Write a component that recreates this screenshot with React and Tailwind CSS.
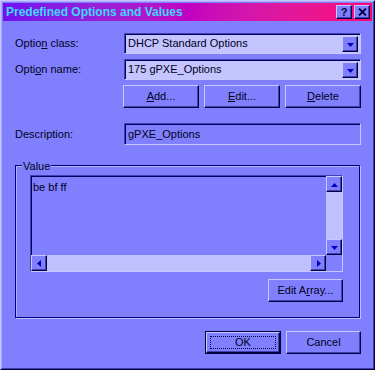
const raised =
  "border border-t-[#c8c8ff] border-l-[#c8c8ff] border-r-[#000040] border-b-[#000040] shadow-[inset_-1px_-1px_0_#4040b0]";
const sunken =
  "border border-t-[#4040b0] border-l-[#4040b0] border-r-[#c8c8ff] border-b-[#c8c8ff] shadow-[inset_1px_1px_0_#000060]";

function Btn({ children, className = "", isDefault = false }) {
  if (isDefault) {
    return (
      <div className={`h-[23px] border border-[#000040] ${className}`}>
        <div className={`h-full w-full flex items-center justify-center ${raised}`}>
          <div className="border border-dotted border-[#000040] w-[calc(100%-6px)] h-[calc(100%-6px)] flex items-center justify-center">
            {children}
          </div>
        </div>
      </div>
    );
  }
  return (
    <div className={`h-[23px] flex items-center justify-center ${raised} ${className}`}>
      {children}
    </div>
  );
}

function ArrowBtn({ dir, className = "" }) {
  const pts = {
    down: "4,6 11,6 7.5,10",
    up: "4,10 11,10 7.5,6",
    left: "9,4 9,11 5,7.5",
    right: "6,4 6,11 10,7.5",
  }[dir];
  return (
    <div className={`w-[16px] h-[16px] bg-[#8080ff] ${raised} flex items-center justify-center ${className}`}>
      <svg width="14" height="14" viewBox="0 0 14 14">
        <polygon points={pts} fill="#0000c0" />
      </svg>
    </div>
  );
}

function Combo({ value }) {
  return (
    <div className={`h-[21px] w-[237px] flex items-center bg-[#c4c4ff] ${sunken} pl-[3px] pr-[2px]`}>
      <span className="flex-1">{value}</span>
      <ArrowBtn dir="down" className="w-[15px] h-[15px]" />
    </div>
  );
}

export default function App() {
  return (
    <div
      className="w-[375px] h-[370px] bg-[#8080ff] text-[#000020] text-[11px] border border-t-[#c8c8ff] border-l-[#c8c8ff] border-r-[#000040] border-b-[#000040] flex flex-col overflow-hidden"
      style={{ fontFamily: '"Liberation Sans", Arial, sans-serif' }}
    >
      <div className="border border-t-[#a8a8ff] border-l-[#a8a8ff] border-r-[#4040b0] border-b-[#4040b0] flex-1 flex flex-col px-[1px] pt-[1px]">
        <div className="h-[18px] bg-gradient-to-r from-[#7010f0] via-[#c000c0] to-[#ff0078] flex items-center pl-[3px] pr-[2px]">
          <span className="flex-1 font-bold text-[#40d8ff] text-[12px]">Predefined Options and Values</span>
          <div className={`w-[16px] h-[14px] bg-[#8080ff] ${raised} flex items-center justify-center font-bold text-[11px] text-[#000040]`}>?</div>
          <div className={`w-[16px] h-[14px] ml-[2px] bg-[#8080ff] ${raised} flex items-center justify-center`}>
            <svg width="9" height="8" viewBox="0 0 9 8">
              <path d="M1 0.5 L8 7.5 M8 0.5 L1 7.5" stroke="#000040" strokeWidth="1.8" />
            </svg>
          </div>
        </div>

        <div className="flex flex-col pl-[12px] pr-[11px] pt-[12px]">
          <div className="flex items-center justify-between">
            <span>Optio<u>n</u> class:</span>
            <Combo value="DHCP Standard Options" />
          </div>
          <div className="flex items-center justify-between mt-[5px]">
            <span>Opti<u>o</u>n name:</span>
            <Combo value="175 gPXE_Options" />
          </div>
          <div className="flex justify-end gap-[5px] mt-[5px]">
            <Btn className="w-[76px]"><span><u>A</u>dd...</span></Btn>
            <Btn className="w-[76px]"><span><u>E</u>dit...</span></Btn>
            <Btn className="w-[76px]"><span><u>D</u>elete</span></Btn>
          </div>
          <div className="flex items-center justify-between mt-[15px]">
            <span>Description:</span>
            <div className={`h-[22px] w-[237px] flex items-center pl-[3px] ${sunken}`}>gPXE_Options</div>
          </div>

          <div className="relative mt-[20px] mr-[1px] h-[153px] border border-[#000080] shadow-[1px_1px_0_#c0c0ff,inset_1px_1px_0_#b0b0ff] pl-[14px] pr-[16px] pt-[9px] flex flex-col">
            <span className="absolute -top-[8px] left-[6px] bg-[#8080ff] px-[1px]">Value</span>
            <div className={`h-[97px] flex flex-col ${sunken} bg-[#8080ff]`}>
              <div className="flex flex-1">
                <div className="flex-1 pl-[2px] pt-[3px]">be bf ff</div>
                <div className="w-[16px] flex flex-col bg-[#c0c0ff]">
                  <ArrowBtn dir="up" />
                  <div className="flex-1" />
                  <ArrowBtn dir="down" />
                </div>
              </div>
              <div className="flex h-[16px]">
                <div className="flex-1 flex bg-[#c0c0ff]">
                  <ArrowBtn dir="left" />
                  <div className="flex-1" />
                  <ArrowBtn dir="right" />
                </div>
                <div className="w-[16px] bg-[#8080ff]" />
              </div>
            </div>
            <div className="flex justify-end mt-[7px]">
              <Btn className="w-[75px]"><span>Edit A<u>r</u>ray...</span></Btn>
            </div>
          </div>

          <div className="flex justify-end gap-[5px] mt-[13px]">
            <Btn isDefault className="w-[76px]"><span>OK</span></Btn>
            <Btn className="w-[75px]"><span>Cancel</span></Btn>
          </div>
        </div>
      </div>
    </div>
  );
}
